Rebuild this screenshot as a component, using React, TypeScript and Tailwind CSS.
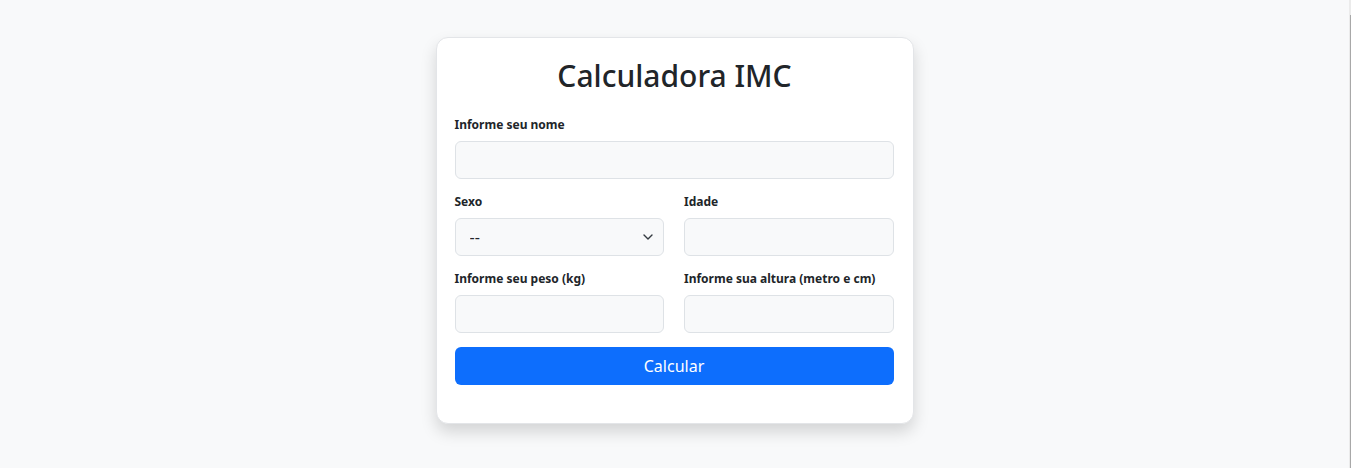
const labelCls = "block h-[20px] mb-[6px] text-[12px] leading-[20px] font-bold text-[#212529]";
const inputCls =
  "block w-full h-[38px] rounded-[6px] border border-[#dee2e6] bg-[#f8f9fa] px-3 text-[16px] text-[#212529] outline-none";

function Field({ label, children }: { label: string; children: React.ReactNode }) {
  return (
    <div>
      <label className={labelCls}>{label}</label>
      {children}
    </div>
  );
}

export default function App() {
  return (
    <div
      className="flex min-h-[468px] bg-[#f8f9fa] text-[#212529]"
      style={{ fontFamily: '"Noto Sans", "Open Sans", sans-serif' }}
    >
      <main className="flex flex-1 justify-center pt-[37px]">
        <div className="h-[387px] w-[478px] rounded-[12px] border border-[#e3e5e8] bg-white px-[18px] pt-[19px] shadow-[0_8px_16px_rgba(0,0,0,0.15)]">
          <h1 className="mb-[20px] h-[38px] text-center text-[30px] leading-[38px] font-medium">Calculadora IMC</h1>

          <div className="flex flex-col gap-[13px] pr-px">
            <Field label="Informe seu nome">
              <input className={inputCls} />
            </Field>

            <div className="grid grid-cols-2 gap-x-[20px]">
              <Field label="Sexo">
                <div className="relative">
                  <select className={inputCls + " appearance-none pl-[14px]"} defaultValue="">
                    <option value="">--</option>
                    <option value="m">Masculino</option>
                    <option value="f">Feminino</option>
                  </select>
                  <svg
                    className="pointer-events-none absolute right-[11px] top-[16px]"
                    width="10"
                    height="6"
                    viewBox="0 0 10 6"
                    fill="none"
                    stroke="#343a40"
                    strokeWidth="1.4"
                    strokeLinecap="round"
                    strokeLinejoin="round"
                  >
                    <path d="M1 1l4 4 4-4" />
                  </svg>
                </div>
              </Field>
              <Field label="Idade">
                <input className={inputCls} />
              </Field>
            </div>

            <div className="grid grid-cols-2 gap-x-[20px]">
              <Field label="Informe seu peso (kg)">
                <input className={inputCls} />
              </Field>
              <Field label="Informe sua altura (metro e cm)">
                <input className={inputCls} />
              </Field>
            </div>

            <button className="mt-[1px] h-[38px] w-full rounded-[6px] bg-[#0d6efd] text-[16px] text-white">Calcular</button>
          </div>
        </div>
      </main>
      <div className="flex w-[2px]">
        <div className="w-px bg-[#ebebeb]" />
        <div className="w-px pt-[15px] bg-[#ebebeb]">
          <div className="h-full bg-[#a8a8a8]" />
        </div>
      </div>
    </div>
  );
}
